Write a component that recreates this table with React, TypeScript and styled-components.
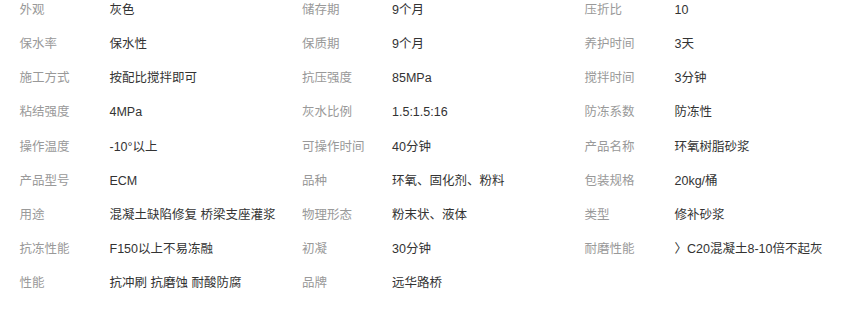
import React from 'react'
import styled, { createGlobalStyle } from 'styled-components'

const GlobalStyle = createGlobalStyle`
  html, body {
    margin: 0;
    padding: 0;
    background: #ffffff;
  }
  body {
    font-family: "Liberation Sans", "Noto Sans CJK SC", Arial, sans-serif;
  }
`

const AttrList = styled.ul`
  list-style: none;
  margin: 0;
  padding: 0 0 0 19.5px;
  display: grid;
  grid-template-columns: repeat(3, 282.5px);
  row-gap: 14.15px;
  font-size: 12.5px;
  line-height: 20px;
`

const AttrItem = styled.li`
  display: flex;
  align-items: center;
  white-space: nowrap;
`

const AttrName = styled.span`
  width: 90px;
  flex-shrink: 0;
  color: #999999;
`

const AttrValue = styled.span`
  color: #333333;
`

const attrs: [string, string][] = [
  ['外观', '灰色'],
  ['储存期', '9个月'],
  ['压折比', '10'],
  ['保水率', '保水性'],
  ['保质期', '9个月'],
  ['养护时间', '3天'],
  ['施工方式', '按配比搅拌即可'],
  ['抗压强度', '85MPa'],
  ['搅拌时间', '3分钟'],
  ['粘结强度', '4MPa'],
  ['灰水比例', '1.5:1.5:16'],
  ['防冻系数', '防冻性'],
  ['操作温度', '-10°以上'],
  ['可操作时间', '40分钟'],
  ['产品名称', '环氧树脂砂浆'],
  ['产品型号', 'ECM'],
  ['品种', '环氧、固化剂、粉料'],
  ['包装规格', '20kg/桶'],
  ['用途', '混凝土缺陷修复 桥梁支座灌浆'],
  ['物理形态', '粉末状、液体'],
  ['类型', '修补砂浆'],
  ['抗冻性能', 'F150以上不易冻融'],
  ['初凝', '30分钟'],
  ['耐磨性能', '〉C20混凝土8-10倍不起灰'],
  ['性能', '抗冲刷 抗磨蚀 耐酸防腐'],
  ['品牌', '远华路桥'],
]

export default function App() {
  return (
    <>
      <GlobalStyle />
      <AttrList>
        {attrs.map(([name, value]) => (
          <AttrItem key={name}>
            <AttrName>{name}</AttrName>
            <AttrValue>{value}</AttrValue>
          </AttrItem>
        ))}
      </AttrList>
    </>
  )
}
